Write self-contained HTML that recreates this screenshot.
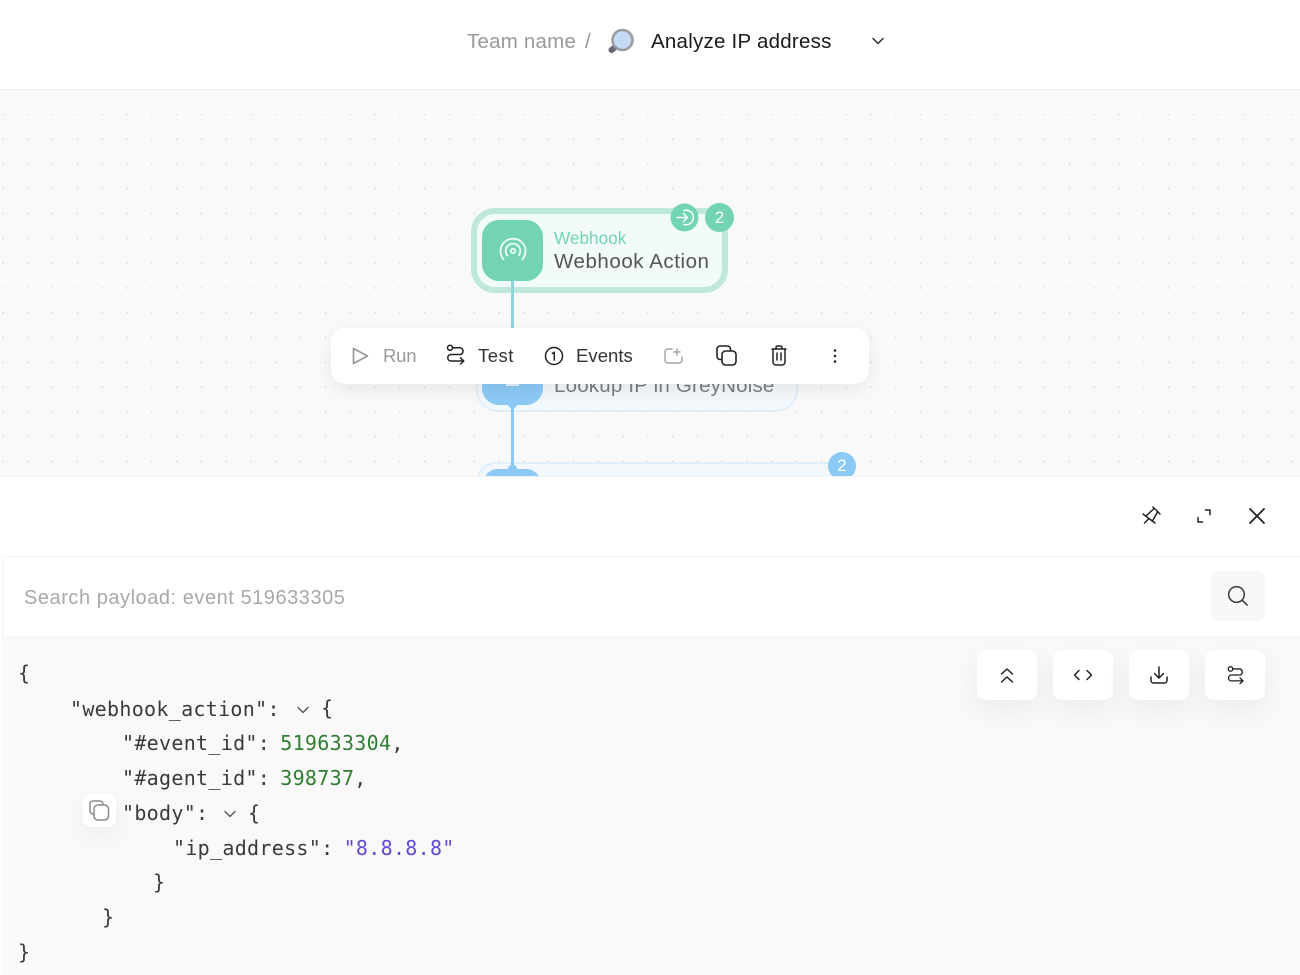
<!DOCTYPE html>
<html><head><meta charset="utf-8">
<style>
html,body{margin:0;padding:0;width:1300px;height:975px;overflow:hidden;background:#fff}
body{position:relative;font-family:"Liberation Sans",sans-serif}
.a{position:absolute;white-space:pre}
.m{position:absolute;white-space:pre;font-family:"DejaVu Sans Mono","Liberation Mono",monospace;font-size:20px;letter-spacing:.3px;word-spacing:-2.2px;line-height:24px;color:#3a3a3a}
svg{position:absolute;overflow:visible}
.s{fill:none;stroke:#222;stroke-width:1.500;stroke-linecap:round;stroke-linejoin:round}
.btn{position:absolute;top:650px;width:60px;height:50px;background:#fff;border-radius:9px;box-shadow:0 10px 28px rgba(0,0,0,.06)}
</style></head><body>
<!-- header -->
<div class="a" style="left:467px;top:30px;font-size:20.500px;line-height:24px;letter-spacing:.22px;color:#999">Team name</div>
<div class="a" style="left:585px;top:30px;font-size:20.500px;line-height:24px;color:#999">/</div>
<svg style="left:605px;top:27px" width="32" height="30" viewBox="0 0 32 30">
<path d="M10.500 20 L6.500 23" stroke="#666a70" stroke-width="6" stroke-linecap="round"/>
<path d="M11 18 L14 15" stroke="#9a9ea3" stroke-width="2.500"/>
<circle cx="17.500" cy="13" r="10" fill="#c3dcf4" stroke="#9a9ea3" stroke-width="2.600"/>
</svg>
<div class="a" style="left:651px;top:30px;font-size:20.500px;line-height:24px;letter-spacing:.24px;color:#1a1a1a">Analyze IP address</div>
<svg style="left:870px;top:34px" width="16" height="14" viewBox="0 0 16 14"><path d="M3 4.500 L8 9.500 L13 4.500" fill="none" stroke="#222" stroke-width="1.400" stroke-linecap="round" stroke-linejoin="round"/></svg>
<!-- canvas -->
<div class="a" style="left:0;top:89px;width:1300px;height:388px;background:#f9f9f9;border-top:1px solid #f1f1f1;box-sizing:border-box"></div>
<svg style="left:0;top:89px" width="1300" height="388">
<defs><pattern id="d" x="3" y="0.500" width="24.800" height="24.800" patternUnits="userSpaceOnUse"><rect x="-.6" y="-.6" width="1.200" height="1.200" fill="#c6c6c6"/><rect x="24.200" y="-.6" width="1.200" height="1.200" fill="#c6c6c6"/><rect x="-.6" y="24.200" width="1.200" height="1.200" fill="#c6c6c6"/><rect x="24.200" y="24.200" width="1.200" height="1.200" fill="#c6c6c6"/></pattern></defs>
<rect x="0" y="25" width="1300" height="363" fill="url(#d)"/>
</svg>
<!-- webhook node -->
<div class="a" style="left:471px;top:208px;width:257px;height:85px;box-sizing:border-box;background:#f2fbfa;border:6px solid #bfe8dc;border-radius:24px"></div>
<div class="a" style="left:511px;top:280px;width:3px;height:50px;background:#8fd2e4"></div>
<div class="a" style="left:482px;top:220px;width:61px;height:61px;background:#72d4b3;border-radius:17px"></div>
<svg style="left:497px;top:235px" width="32" height="32" viewBox="0 0 32 32" fill="none" stroke="#f0faf7" stroke-width="1.800" stroke-linecap="round">
<circle cx="16" cy="16" r="2.200"/>
<path d="M10.300 20.500 A7.300 7.300 0 1 1 21.700 20.500"/>
<path d="M6.500 24.300 A12.500 12.500 0 1 1 25.500 24.300"/>
</svg>
<div class="a" style="left:554px;top:228px;font-size:17.200px;line-height:21px;color:#72d4b3">Webhook</div>
<div class="a" style="left:554px;top:249px;font-size:20.500px;line-height:26px;letter-spacing:.55px;color:#555">Webhook Action</div>
<svg style="left:670px;top:203px" width="29" height="29" viewBox="0 0 29 29"><circle cx="14.500" cy="14.500" r="14" fill="#72d4b3"/><path d="M7 14.500 H17 M13.500 10.500 L17.500 14.500 L13.500 18.500 M14 7.500 A7.300 7.300 0 1 1 14 21.500" fill="none" stroke="#fff" stroke-width="1.500" stroke-linecap="round" stroke-linejoin="round"/></svg>
<div class="a" style="left:705px;top:203px;width:29px;height:29px;border-radius:50%;background:#72d4b3;color:#fff;font-size:17px;line-height:29px;text-align:center">2</div>
<!-- lookup node -->
<div class="a" style="left:476px;top:360px;width:322px;height:52px;box-sizing:border-box;background:#f2f8fc;border:2px solid #dfeefa;border-radius:22px"></div>
<div class="a" style="left:482px;top:345px;width:61px;height:60px;background:#8ccaf6;border-radius:17px"></div>
<div class="a" style="left:506px;top:384px;width:13px;height:2px;background:#e4f2fd"></div>
<div class="a" style="left:554px;top:373px;font-size:20.500px;line-height:26px;letter-spacing:.2px;color:#7d7d7d">Lookup IP in GreyNoise</div>
<!-- third node -->
<div class="a" style="left:476px;top:462px;width:374px;height:40px;box-sizing:border-box;background:#f2f8fc;border:2px solid #dfeefa;border-radius:20px"></div>
<div class="a" style="left:483px;top:469px;width:58px;height:30px;background:#8ccaf6;border-radius:16px"></div>
<div class="a" style="left:828px;top:452px;width:28px;height:28px;border-radius:50%;background:#8ccaf6;color:#fff;font-size:17px;line-height:28px;text-align:center">2</div>
<!-- connector -->
<div class="a" style="left:511px;top:400px;width:3px;height:70px;background:#8ccaf6"></div>
<div class="a" style="left:508px;top:402px;width:9px;height:6px;border-radius:50%;background:#8ccaf6"></div>
<div class="a" style="left:508px;top:465px;width:9px;height:6px;border-radius:50%;background:#8ccaf6"></div>
<!-- toolbar -->
<div class="a" style="left:331px;top:328px;width:538px;height:56px;background:#fff;border-radius:14px;box-shadow:0 6px 18px rgba(0,0,0,.07)"></div>
<svg style="left:350px;top:346px" width="20" height="20" viewBox="0 0 20 20"><path d="M3.500 2.500 L17.500 10 L3.500 17.500 Z" fill="none" stroke="#999" stroke-width="1.700" stroke-linejoin="round"/></svg>
<div class="a" style="left:383px;top:344px;font-size:18.500px;line-height:24px;letter-spacing:-.2px;color:#999">Run</div>
<svg style="left:445px;top:344px" width="21" height="21" viewBox="0 0 21 21"><g class="s"><circle cx="5" cy="3.800" r="2.500"/><path d="M7.500 3.800 H15.500 A3.500 3.500 0 0 1 15.500 10.500 H5.500 A3.300 3.300 0 0 0 5.500 17 H18.500 M15.500 13.800 L18.800 17 L15.500 20"/></g></svg>
<div class="a" style="left:478px;top:344px;font-size:18.500px;line-height:24px;letter-spacing:.5px;color:#333">Test</div>
<svg style="left:544px;top:346px" width="20" height="20" viewBox="0 0 20 20"><circle class="s" cx="10" cy="10" r="8.500"/><path class="s" d="M8.300 7.500 L10.300 6.200 V14" stroke-width="1.400"/></svg>
<div class="a" style="left:576px;top:344px;font-size:18.500px;line-height:24px;letter-spacing:.05px;color:#333">Events</div>
<svg style="left:664px;top:346px" width="20" height="20" viewBox="0 0 20 20" fill="none" stroke="#a5a5a5" stroke-width="1.500" stroke-linecap="round"><path d="M8 3 H4 A3 3 0 0 0 1 6 V14 A3 3 0 0 0 4 17 H15 A3 3 0 0 0 18 14 V11 M13 3 V9 M10 6 H16"/></svg>
<svg style="left:716px;top:345px" width="21" height="21" viewBox="0 0 21 21"><g fill="none" stroke="#222" stroke-width="1.600"><path d="M6 14.500 H4 A3 3 0 0 1 1 11.500 V4 A3 3 0 0 1 4 1 H11.500 A3 3 0 0 1 14.500 4 V6"/><rect x="6" y="6" width="14" height="14" rx="3.500"/></g></svg>
<svg style="left:770px;top:345px" width="18" height="21" viewBox="0 0 18 21"><g class="s"><path d="M2 4 H16 M6 4 V2.500 A1.500 1.500 0 0 1 7.500 1 H10.500 A1.500 1.500 0 0 1 12 2.500 V4 M3 4 V17 A3 3 0 0 0 6 20 H12 A3 3 0 0 0 15 17 V4 M7 8 V15 M11 8 V15"/></g></svg>
<svg style="left:830px;top:346px" width="10" height="20" viewBox="0 0 10 20"><circle cx="5" cy="4.500" r="1.300" fill="#222"/><circle cx="5" cy="10" r="1.300" fill="#222"/><circle cx="5" cy="15.500" r="1.300" fill="#222"/></svg>
<!-- panel -->
<div class="a" style="left:0;top:476px;width:1300px;height:499px;background:#fff;border-top:1px solid #f3f3f3;box-sizing:border-box"></div>
<svg style="left:1141px;top:505px" width="22" height="22" viewBox="0 0 22 22"><g class="s"><path d="M12 2 L19 9 M2 9 L14 18 M5 11 L12.500 4 M16.500 7 L11.500 16 M3.500 18 L8 13.500"/></g></svg>
<svg style="left:1196px;top:508px" width="16" height="16" viewBox="0 0 16 16"><g class="s" stroke-linecap="butt" stroke-linejoin="miter"><path d="M9.500 2 H14 V6.500 M2 9.500 V14 H6.500"/></g></svg>
<svg style="left:1248px;top:507px" width="18" height="18" viewBox="0 0 18 18"><path d="M2 2 L16 16 M16 2 L2 16" stroke="#222" stroke-width="1.800" stroke-linecap="round"/></svg>
<!-- search -->
<div class="a" style="left:2px;top:556px;width:1298px;height:81px;box-sizing:border-box;border:1px solid #f3f3f3;border-right:0;background:#fff"></div>
<div class="a" style="left:24px;top:585px;font-size:20px;line-height:26px;letter-spacing:.54px;color:#a8a8a8">Search payload: event 519633305</div>
<div class="a" style="left:1210px;top:571px;width:55px;height:50px;background:#f8f8f8;border-radius:9px"></div>
<svg style="left:1227px;top:585px" width="22" height="22" viewBox="0 0 22 22"><g fill="none" stroke="#444" stroke-width="1.600" stroke-linecap="round"><circle cx="9.500" cy="9.500" r="7.800"/><path d="M15.500 15.500 L20 20"/></g></svg>
<!-- code -->
<div class="a" style="left:2px;top:637px;width:1298px;height:338px;background:#f9f9f9"></div>
<div class="btn" style="left:977px"></div><div class="btn" style="left:1053px"></div><div class="btn" style="left:1129px"></div><div class="btn" style="left:1205px"></div>
<svg style="left:999px;top:667px" width="16" height="18" viewBox="0 0 16 18"><path class="s" d="M2.500 7 L8 2 L13.500 7 M2.500 15 L8 10 L13.500 15"/></svg>
<svg style="left:1072px;top:667px" width="22" height="16" viewBox="0 0 22 16"><path class="s" d="M7 3.500 L2.500 8 L7 12.500 M15 3.500 L19.500 8 L15 12.500"/></svg>
<svg style="left:1150px;top:666px" width="18" height="19" viewBox="0 0 18 19"><path class="s" d="M9 1 V12 M4.500 7.500 L9 12 L13.500 7.500 M1 11 V14.500 A2.500 2.500 0 0 0 3.500 17 H14.500 A2.500 2.500 0 0 0 17 14.500 V11"/></svg>
<svg style="left:1226px;top:665px" width="19" height="20" viewBox="0 0 21 21"><g class="s"><circle cx="5" cy="3.800" r="2.500"/><path d="M7.500 3.800 H15.500 A3.500 3.500 0 0 1 15.500 10.500 H5.500 A3.300 3.300 0 0 0 5.500 17 H18.500 M15.500 13.800 L18.800 17 L15.500 20"/></g></svg>

<div class="m" style="left:18px;top:661px">{</div>
<div class="m" style="left:70px;top:697px">"webhook_action":</div>
<svg style="left:296px;top:703px" width="14" height="14" viewBox="0 0 14 14"><path d="M2 4.500 L7 9.500 L12 4.500" fill="none" stroke="#555" stroke-width="1.400" stroke-linecap="round" stroke-linejoin="round"/></svg>
<div class="m" style="left:321px;top:696px">{</div>
<div class="m" style="left:122px;top:731px">"#event_id": <span style="color:#2f7d2f">519633304</span>,</div>
<div class="m" style="left:122px;top:766px">"#agent_id": <span style="color:#2f7d2f">398737</span>,</div>
<div class="a" style="left:83px;top:794px;width:33px;height:33px;background:#fff;border-radius:8px;box-shadow:0 8px 24px rgba(0,0,0,.05)"></div>
<svg style="left:89px;top:800px" width="21" height="21" viewBox="0 0 21 21"><g fill="none" stroke="#8a8a8a" stroke-width="1.500"><path d="M5 14 H4 A3 3 0 0 1 1 11 V4 A3 3 0 0 1 4 1 H11 A3 3 0 0 1 14 4 V5"/><rect x="5" y="5" width="14.500" height="15" rx="4"/></g></svg>
<div class="m" style="left:122px;top:801px">"body":</div>
<svg style="left:223px;top:807px" width="14" height="14" viewBox="0 0 14 14"><path d="M2 4.500 L7 9.500 L12 4.500" fill="none" stroke="#555" stroke-width="1.400" stroke-linecap="round" stroke-linejoin="round"/></svg>
<div class="m" style="left:248px;top:801px">{</div>
<div class="m" style="left:173px;top:836px">"ip_address": <span style="color:#5f4bd8">"8.8.8.8"</span></div>
<div class="m" style="left:153px;top:870px">}</div>
<div class="m" style="left:102px;top:905px">}</div>
<div class="m" style="left:18px;top:940px">}</div>
</body></html>
